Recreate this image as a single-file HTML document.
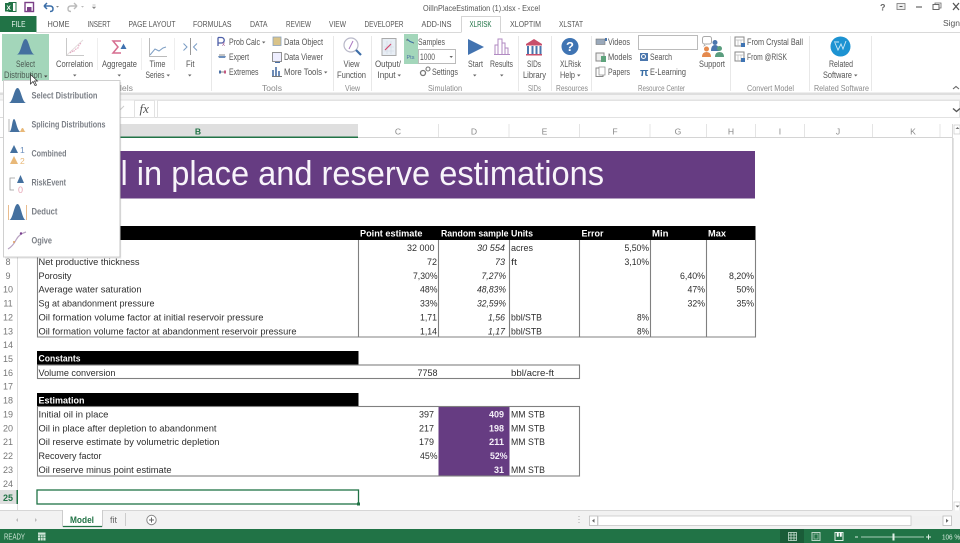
<!DOCTYPE html>
<html><head><meta charset="utf-8"><title>OilInPlaceEstimation (1).xlsx - Excel</title>
<style>
html,body{margin:0;padding:0;background:#fff;width:960px;height:543px;overflow:hidden}
svg{display:block;filter:blur(.3px)}
text{font-family:"Liberation Sans",sans-serif;white-space:pre}
.c{font-size:9.6px;fill:#2e2e2e}
.i{font-size:9.6px;fill:#2e2e2e;font-style:italic}
.h{font-size:9.6px;fill:#fff;font-weight:bold}
.w{font-size:9.6px;fill:#f4eef8;font-weight:bold}
.r{font-size:8.9px;fill:#555}
.g{font-size:8.2px;fill:#8a8a8a}
.t{font-size:8.6px;fill:#555}
.m{font-size:8.9px;fill:#7b7f86;font-weight:bold}
.n{font-size:9px;fill:#777;text-anchor:middle}
.k{font-size:8.6px;fill:#8a8a8a;text-anchor:middle}
</style></head><body>
<svg width="960" height="543" viewBox="0 0 960 543" xmlns="http://www.w3.org/2000/svg">
<rect width="960" height="543" fill="#fff"/>

<!-- title bar -->
<rect x="9" y="2.500" width="7" height="9" fill="#fff" stroke="#217346"/><rect x="5" y="3" width="8" height="8.500" fill="#217346"/>
<text x="6.500" y="10" style="font-size:6.500px;fill:#fff;font-weight:bold">X</text>
<rect x="25" y="2.500" width="8.500" height="9" fill="none" stroke="#7b3f87" stroke-width="1.400"/><rect x="27" y="7" width="4.500" height="4.500" fill="#7b3f87"/>
<path d="M44 6 L47 3 M44 6 L47 9 M44 6 H50 Q53 6 53 9 Q53 11.500 50 11.500" fill="none" stroke="#3b6ea8" stroke-width="1.500"/>
<path d="M56 6 l3 0 l-1.500 1.600z" fill="#888"/>
<path d="M77 6 L74 3 M77 6 L74 9 M77 6 H71 Q68 6 68 9 Q68 11.500 71 11.500" fill="none" stroke="#bbb" stroke-width="1.400"/>
<path d="M81 6 l3 0 l-1.500 1.600z" fill="#bbb"/>
<path d="M92.500 5h3M92.500 7l3 0l-1.500 1.600z" stroke="#888" stroke-width=".6" fill="#888"/>
<text x="423" y="11" class="t" textLength="117" lengthAdjust="spacingAndGlyphs">OilInPlaceEstimation (1).xlsx - Excel</text>
<text x="880" y="10.500" style="font-size:9px;font-weight:bold;fill:#666">?</text>
<rect x="897" y="3.500" width="8" height="6" fill="#eee" stroke="#777" stroke-width=".8"/><path d="M899.500 6.500h3" stroke="#555"/>
<path d="M916 7h6" stroke="#666" stroke-width="1.200"/>
<rect x="933" y="4.500" width="6" height="5" fill="none" stroke="#666"/><path d="M935 4.500V3h6v5h-2" fill="none" stroke="#666" stroke-width=".8"/>
<path d="M953 3 L959 10 M959 3 L953 10" stroke="#555" stroke-width="1.300"/>
<text x="943" y="26" class="t" textLength="17" lengthAdjust="spacingAndGlyphs">Sign</text>

<!-- tabs -->
<rect x="0" y="16" width="36.500" height="16" fill="#217346"/>
<text x="11.500" y="27" textLength="14" lengthAdjust="spacingAndGlyphs" style="font-size:8.600px;fill:#e8f5ee">FILE</text>
<text x="47.500" y="27" class="t" textLength="22" lengthAdjust="spacingAndGlyphs">HOME</text>
<text x="87.500" y="27" class="t" textLength="23" lengthAdjust="spacingAndGlyphs">INSERT</text>
<text x="128.500" y="27" class="t" textLength="47" lengthAdjust="spacingAndGlyphs">PAGE LAYOUT</text>
<text x="193" y="27" class="t" textLength="38.500" lengthAdjust="spacingAndGlyphs">FORMULAS</text>
<text x="250" y="27" class="t" textLength="17.500" lengthAdjust="spacingAndGlyphs">DATA</text>
<text x="286" y="27" class="t" textLength="25" lengthAdjust="spacingAndGlyphs">REVIEW</text>
<text x="329" y="27" class="t" textLength="17" lengthAdjust="spacingAndGlyphs">VIEW</text>
<text x="364.500" y="27" class="t" textLength="39" lengthAdjust="spacingAndGlyphs">DEVELOPER</text>
<text x="421.500" y="27" class="t" textLength="30" lengthAdjust="spacingAndGlyphs">ADD-INS</text>
<path d="M461.500 32.500V16.500H500.500V32.500" fill="#fff" stroke="#d4d4d4"/>
<text x="469.500" y="27" class="t" textLength="22" lengthAdjust="spacingAndGlyphs" style="fill:#217346">XLRISK</text>
<text x="510" y="27" class="t" textLength="31" lengthAdjust="spacingAndGlyphs">XLOPTIM</text>
<text x="559" y="27" class="t" textLength="24" lengthAdjust="spacingAndGlyphs">XLSTAT</text>
<path d="M36 32.500H461M500 32.500H960" stroke="#d9d9d9"/>

<!-- ribbon bottom / formula bar -->
<rect x="0" y="92.500" width="960" height="2.500" fill="#dedede"/>
<rect x="0" y="95" width="960" height="5" fill="#f4f4f4"/>
<rect x="0" y="100" width="960" height="17.500" fill="#fff"/>
<path d="M0 117.500H960" stroke="#dcdcdc"/>
<path d="M0 100H960" stroke="#e2e2e2"/>
<rect x="134.500" y="100.500" width="20" height="17" fill="#fff" stroke="#e2e2e2"/>
<rect x="157.500" y="100.500" width="802" height="17" fill="#fff" stroke="#e2e2e2"/>
<path d="M120 110l4-4" stroke="#ccc" stroke-width="1"/>
<text x="139.500" y="113" style="font-family:'Liberation Serif',serif;font-size:13px;font-style:italic;fill:#555">fx</text>
<path d="M953 108.500l3.500 3 3.500-3" fill="none" stroke="#555" stroke-width="1.400"/>
<path d="M953 89l3-2.500 3 2.500" fill="none" stroke="#666" stroke-width="1.100"/>

<!-- ribbon separators -->
<path d="M211.500 36V91M333.500 36V91M371.500 36V91M518.500 36V91M551.500 36V91M591.500 36V91M730.500 36V91M809.500 36V91M871.500 36V91" stroke="#e8e8e8"/>
<path d="M97.500 38V70M141.500 38V70M174.500 38V70" stroke="#eee"/>

<!-- select distribution -->
<rect x="2" y="34" width="47" height="47" fill="#a3d6ba"/>
<path d="M16.500 54.500C21 54.500 22 39 25.500 39S30 54.500 35 54.500Z" fill="#44709f"/>
<text x="16" y="67" class="r" textLength="19" lengthAdjust="spacingAndGlyphs" style="fill:#4b5a52">Select</text>
<text x="4" y="78" class="r" textLength="38" lengthAdjust="spacingAndGlyphs" style="fill:#4b5a52">Distribution</text>
<path d="M44 75.500h3.500l-1.750 2z" fill="#444"/>

<!-- correlation -->
<path d="M66.500 38V55.500H84" fill="none" stroke="#c9c9c9"/><path d="M67 55L83 40" stroke="#e4dede"/>
<path d="M70 53l2-2 1 1 3-3 2-1 1-3 2-2" fill="none" stroke="#e3a9c0" stroke-width="1.200" stroke-dasharray="1.500 1"/>
<text x="56" y="67" class="r" textLength="37" lengthAdjust="spacingAndGlyphs">Correlation</text>
<path d="M73 74.500h3.500l-1.750 2z" fill="#666"/>

<!-- aggregate -->
<path d="M121 41H113L118 47L113 53H121" fill="none" stroke="#d66d8f" stroke-width="1.500"/>
<path d="M120.500 49L123.500 43.500L126.500 49Z" fill="#3f72b0"/>
<text x="102" y="67" class="r" textLength="35" lengthAdjust="spacingAndGlyphs">Aggregate</text>
<path d="M117.500 74.500h3.500l-1.750 2z" fill="#666"/>

<!-- time series -->
<path d="M149.500 38V56.500H167" fill="none" stroke="#bbb"/>
<path d="M150 55L155 49L159 51L163 48L166 47" fill="none" stroke="#7f9fc4" stroke-width="1"/>
<text x="149.500" y="67" class="r" textLength="16" lengthAdjust="spacingAndGlyphs">Time</text>
<text x="145.500" y="78" class="r" textLength="19" lengthAdjust="spacingAndGlyphs">Series</text>
<path d="M166.500 74.500h3.500l-1.750 2z" fill="#666"/>

<!-- fit -->
<path d="M183.500 43.500L187 47L183.500 50.500" fill="none" stroke="#7a9cc4"/><path d="M190.500 38V55" stroke="#999"/><path d="M197 43.500L193.500 47L197 50.500" fill="none" stroke="#7a9cc4"/>
<text x="186" y="67" class="r" textLength="8.500" lengthAdjust="spacingAndGlyphs">Fit</text>
<path d="M188 74.500h3.500l-1.750 2z" fill="#666"/>
<text x="105" y="91" class="g" textLength="28" lengthAdjust="spacingAndGlyphs">Models</text>

<!-- tools -->
<path d="M218 37.500V46M218 37.500h3.500a2.500 2.500 0 0 1 0 5.500H218" fill="none" stroke="#4e5fa8" stroke-width="1.300"/>
<text x="222" y="46" style="font-size:6px;fill:#a0538c">x</text>
<text x="229" y="45" class="r" textLength="31" lengthAdjust="spacingAndGlyphs">Prob Calc</text><path d="M262 41.500h3.400l-1.700 2z" fill="#666"/>
<path d="M218 56h8l-1 2h-6z" fill="#6d8fbc"/><path d="M219 55h6" stroke="#888"/>
<text x="229" y="60" class="r" textLength="20" lengthAdjust="spacingAndGlyphs">Expert</text>
<path d="M219 72h7" stroke="#888"/><path d="M220 70.500v3" stroke="#4a6fa5" stroke-width="2"/><path d="M225 70.500v3" stroke="#c2567f" stroke-width="2"/>
<text x="229" y="75" class="r" textLength="29.500" lengthAdjust="spacingAndGlyphs">Extremes</text>
<rect x="273" y="37" width="8" height="8.500" fill="#d9c389" stroke="#8aa2c0" stroke-width=".8"/>
<text x="284" y="45" class="r" textLength="39" lengthAdjust="spacingAndGlyphs">Data Object</text>
<rect x="272.500" y="52.500" width="9" height="9" fill="#eef" stroke="#777" stroke-width=".8"/><path d="M275 62.500h5" stroke="#4a6fa5"/>
<text x="284" y="60" class="r" textLength="39" lengthAdjust="spacingAndGlyphs">Data Viewer</text>
<path d="M273 76V70M276 76V67M279 76V71" stroke="#4a6fa5" stroke-width="1.600"/><path d="M272 76.500h10" stroke="#777"/>
<text x="284" y="75" class="r" textLength="38" lengthAdjust="spacingAndGlyphs">More Tools</text>
<path d="M324 71.500h3.400l-1.700 2z" fill="#666"/>
<text x="262" y="91" class="g" textLength="20" lengthAdjust="spacingAndGlyphs">Tools</text>

<!-- view function -->
<circle cx="351" cy="45" r="7" fill="#fff" stroke="#b9b9c9" stroke-width="1.200"/><path d="M349 49Q351 45 353 41" fill="none" stroke="#a875c0"/><path d="M356 50L361 55" stroke="#3d6ea8" stroke-width="2.200"/>
<text x="343.500" y="67" class="r" textLength="16" lengthAdjust="spacingAndGlyphs">View</text>
<text x="337" y="78" class="r" textLength="29" lengthAdjust="spacingAndGlyphs">Function</text>
<text x="345" y="91" class="g" textLength="15" lengthAdjust="spacingAndGlyphs">View</text>

<!-- output input -->
<rect x="382" y="38.500" width="14" height="17" fill="#e8eef5" stroke="#aaa"/><path d="M384 47h10M384 51h10M387 41v13M391 41v13" stroke="#cfd7e2" stroke-width=".6"/><path d="M385 50l6-6" stroke="#d34a6f" stroke-width="1.200"/>
<text x="375" y="67" class="r" textLength="26" lengthAdjust="spacingAndGlyphs">Output/</text>
<text x="377.500" y="78" class="r" textLength="18" lengthAdjust="spacingAndGlyphs">Input</text>
<path d="M397.500 74.500h3.500l-1.750 2z" fill="#666"/>

<!-- samples -->
<rect x="404" y="34" width="14" height="30" fill="#a3d6ba"/>
<path d="M407 39l3 2.500 4 1.500" fill="none" stroke="#3a6ea5"/><path d="M407 39v2M413 43h1" stroke="#777"/>
<text x="406.500" y="59" style="font-size:5.500px;fill:#4a6fa5">Pts</text>
<text x="418" y="45" class="r" textLength="27" lengthAdjust="spacingAndGlyphs">Samples</text>
<rect x="418.500" y="49.500" width="37" height="14" fill="#fff" stroke="#bbb"/>
<text x="420" y="60" class="r" textLength="15" lengthAdjust="spacingAndGlyphs">1000</text>
<path d="M449.500 56h3.400l-1.700 2z" fill="#666"/>
<circle cx="423" cy="73" r="2.500" fill="none" stroke="#777" stroke-width="1.300"/><circle cx="428" cy="69" r="2" fill="none" stroke="#777" stroke-width="1.100"/>
<text x="432" y="75" class="r" textLength="26" lengthAdjust="spacingAndGlyphs">Settings</text>
<text x="428" y="91" class="g" textLength="34" lengthAdjust="spacingAndGlyphs">Simulation</text>

<!-- start / results -->
<path d="M468 39L484 47L468 55Z" fill="#4373b0"/>
<text x="468" y="67" class="r" textLength="15" lengthAdjust="spacingAndGlyphs">Start</text>
<path d="M473 74.500h3.500l-1.750 2z" fill="#666"/>
<path d="M495 54.500V45h3v9.500M498 54.500V39h4v15.500M502 54.500V43h3v11.500M505 54.500V48h3v6.500M494 54.500h16" fill="none" stroke="#b18ac2" stroke-width="1"/>
<text x="490" y="67" class="r" textLength="23" lengthAdjust="spacingAndGlyphs">Results</text>
<path d="M500 74.500h3.500l-1.750 2z" fill="#666"/>

<!-- sids -->
<path d="M526 44L534 39L542 44Z" fill="#c94f6b"/><rect x="526" y="44" width="16" height="1.500" fill="#c94f6b"/>
<path d="M528 46V54M532.500 46V54M536.500 46V54M540.500 46V54" stroke="#4a76ad" stroke-width="2"/><rect x="526" y="54" width="16" height="1.500" fill="#c94f6b"/>
<text x="527" y="67" class="r" textLength="14" lengthAdjust="spacingAndGlyphs">SIDs</text>
<text x="523" y="78" class="r" textLength="23" lengthAdjust="spacingAndGlyphs">Library</text>
<text x="528" y="91" class="g" textLength="13" lengthAdjust="spacingAndGlyphs">SIDs</text>

<!-- help -->
<circle cx="570" cy="46.500" r="8.500" fill="#3f74b3"/>
<text x="570" y="51" style="font-size:13px;font-weight:bold;fill:#fff;text-anchor:middle">?</text>
<text x="560" y="67" class="r" textLength="21" lengthAdjust="spacingAndGlyphs">XLRisk</text>
<text x="560" y="78" class="r" textLength="15" lengthAdjust="spacingAndGlyphs">Help</text>
<path d="M577 74.500h3.500l-1.750 2z" fill="#666"/>
<text x="556" y="91" class="g" textLength="32" lengthAdjust="spacingAndGlyphs">Resources</text>

<!-- resource center -->
<rect x="596" y="39" width="9" height="5.500" fill="#9aa9bb" stroke="#777" stroke-width=".6"/><rect x="605" y="38" width="2" height="3" fill="#4a76ad"/>
<text x="608" y="45" class="r" textLength="22" lengthAdjust="spacingAndGlyphs">Videos</text>
<rect x="596" y="53" width="8" height="8" fill="#eee" stroke="#888"/><rect x="601" y="56" width="5" height="6" fill="#5ea37c"/>
<text x="608" y="60" class="r" textLength="24" lengthAdjust="spacingAndGlyphs">Models</text>
<rect x="596" y="68" width="7" height="8.500" fill="#fff" stroke="#888"/><rect x="599" y="67" width="6" height="8" fill="#fff" stroke="#888" stroke-width=".7"/>
<text x="608" y="75" class="r" textLength="22" lengthAdjust="spacingAndGlyphs">Papers</text>
<rect x="638.500" y="35.500" width="59" height="14" fill="#fff" stroke="#bbb"/>
<rect x="640" y="53" width="8" height="8" fill="#4a76ad"/><circle cx="643.500" cy="56.500" r="2" fill="none" stroke="#fff"/>
<text x="650" y="60" class="r" textLength="22" lengthAdjust="spacingAndGlyphs">Search</text>
<text x="640" y="76" style="font-size:11px;fill:#3a6ea5;font-weight:bold">π</text>
<text x="650" y="75" class="r" textLength="36" lengthAdjust="spacingAndGlyphs">E-Learning</text>
<text x="638" y="91" class="g" textLength="47" lengthAdjust="spacingAndGlyphs">Resource Center</text>

<!-- support -->
<rect x="702.500" y="36.500" width="9" height="7.500" rx="2" fill="#fff" stroke="#aaa"/><path d="M705 44l-1 2 3-2" fill="#fff" stroke="#aaa" stroke-width=".7"/>
<circle cx="706.500" cy="49" r="2.500" fill="#e58a4e"/><path d="M702 57q0-5 4.500-5t4.500 5z" fill="#e58a4e"/>
<circle cx="715" cy="42.500" r="2.500" fill="#4a76ad"/><path d="M711 51q0-6 4-6t4 6z" fill="#4a76ad"/>
<circle cx="719.500" cy="48.500" r="2.500" fill="#5a9d7e"/><path d="M715 57q0-5 4.500-5t4.500 5z" fill="#5a9d7e"/>
<text x="699" y="67" class="r" textLength="26" lengthAdjust="spacingAndGlyphs">Support</text>

<!-- convert -->
<rect x="735" y="37" width="9" height="9" fill="#fff" stroke="#888"/><path d="M735 40h9M738 40v6M741 40v6" stroke="#bbb" stroke-width=".7"/><rect x="741" y="43" width="4" height="4" fill="#3f74b3"/>
<text x="747" y="45" class="r" textLength="56" lengthAdjust="spacingAndGlyphs">From Crystal Ball</text>
<rect x="735" y="52" width="9" height="9" fill="#fff" stroke="#888"/><path d="M735 55h9M738 55v6M741 55v6" stroke="#bbb" stroke-width=".7"/><rect x="741" y="58" width="4" height="4" fill="#3f74b3"/>
<text x="747" y="60" class="r" textLength="40" lengthAdjust="spacingAndGlyphs">From @RISK</text>
<text x="747" y="91" class="g" textLength="47" lengthAdjust="spacingAndGlyphs">Convert Model</text>

<!-- related -->
<circle cx="840.500" cy="46.500" r="10" fill="#1d93d2"/>
<path d="M835 43l3 7 3-6 2 5 3-8M834 42h5" fill="none" stroke="#cfeaf7" stroke-width=".9"/>
<text x="829" y="67" class="r" textLength="24" lengthAdjust="spacingAndGlyphs">Related</text>
<text x="823" y="78" class="r" textLength="29" lengthAdjust="spacingAndGlyphs">Software</text>
<path d="M854 74.500h3.500l-1.750 2z" fill="#666"/>
<text x="814" y="91" class="g" textLength="55" lengthAdjust="spacingAndGlyphs">Related Software</text>

<!-- column headers -->
<path d="M0 137.500H952" stroke="#d4d4d4"/>
<rect x="18" y="124" width="340" height="13" fill="#dfdfdf"/>
<rect x="18" y="136.500" width="340" height="1.500" fill="#217346"/>
<path d="M438.500 124V137M509 124V137M579.500 124V137M650 124V137M706.500 124V137M755.500 124V137M804.500 124V137M872.500 124V137M940 124V137" stroke="#e4e4e4"/>
<text x="198" y="134.500" class="k" style="fill:#217346;font-weight:bold">B</text>
<text x="398" y="134.500" class="k">C</text><text x="474" y="134.500" class="k">D</text><text x="544.500" y="134.500" class="k">E</text><text x="615" y="134.500" class="k">F</text><text x="678" y="134.500" class="k">G</text><text x="731" y="134.500" class="k">H</text><text x="780" y="134.500" class="k">I</text><text x="838" y="134.500" class="k">J</text><text x="913" y="134.500" class="k">K</text>

<!-- row headers -->
<path d="M17.500 138V511" stroke="#dcdcdc"/>
<text x="8" y="265" class="n">8</text><text x="8" y="279" class="n">9</text><text x="8" y="292.500" class="n">10</text><text x="8" y="306.500" class="n">11</text><text x="8" y="320.500" class="n">12</text><text x="8" y="334.500" class="n">13</text><text x="8" y="348" class="n">14</text><text x="8" y="362" class="n">15</text><text x="8" y="376" class="n">16</text><text x="8" y="389.500" class="n">17</text><text x="8" y="403.500" class="n">18</text><text x="8" y="417.500" class="n">19</text><text x="8" y="431.500" class="n">20</text><text x="8" y="445" class="n">21</text><text x="8" y="459" class="n">22</text><text x="8" y="473" class="n">23</text><text x="8" y="487" class="n">24</text>
<rect x="0" y="490" width="17.500" height="14" fill="#dfdfdf"/><rect x="16.500" y="490" width="1.500" height="14" fill="#217346"/>
<text x="8" y="501" class="n" style="fill:#217346;font-weight:bold">25</text>

<!-- title banner -->
<rect x="37" y="151" width="718" height="47.500" fill="#663c82"/>
<text x="84" y="185" style="font-size:34px;fill:#f8f4fa">Oi</text>
<text x="120.500" y="185" textLength="483.500" lengthAdjust="spacingAndGlyphs" style="font-size:34px;fill:#f8f4fa">l in place and reserve estimations</text>

<!-- main table -->
<rect x="37" y="226" width="718.500" height="14" fill="#000"/>
<path d="M37.500 240V337H755.500V240M358.500 240V337M438.500 240V337M509.500 240V337M579.500 240V337M650.500 240V337M706.500 240V337" fill="none" stroke="#808080" stroke-width="1.100"/>
<text x="360" y="236.500" class="h" textLength="62.500" lengthAdjust="spacingAndGlyphs">Point estimate</text>
<text x="441" y="236.500" class="h" textLength="67.500" lengthAdjust="spacingAndGlyphs">Random sample</text>
<text x="511" y="236.500" class="h" textLength="22" lengthAdjust="spacingAndGlyphs">Units</text>
<text x="581.500" y="236.500" class="h" textLength="22" lengthAdjust="spacingAndGlyphs">Error</text>
<text x="652" y="236.500" class="h" textLength="16.500" lengthAdjust="spacingAndGlyphs">Min</text>
<text x="708" y="236.500" class="h" textLength="18" lengthAdjust="spacingAndGlyphs">Max</text>

<text x="38.500" y="265" class="c" textLength="101" lengthAdjust="spacingAndGlyphs">Net productive thickness</text>
<text x="38.500" y="279" class="c" textLength="33" lengthAdjust="spacingAndGlyphs">Porosity</text>
<text x="38.500" y="292.500" class="c" textLength="103" lengthAdjust="spacingAndGlyphs">Average water saturation</text>
<text x="38.500" y="306.500" class="c" textLength="116" lengthAdjust="spacingAndGlyphs">Sg at abandonment pressure</text>
<text x="38.500" y="320.500" class="c" textLength="225" lengthAdjust="spacingAndGlyphs">Oil formation volume factor at initial reservoir pressure</text>
<text x="38.500" y="334.500" class="c" textLength="258" lengthAdjust="spacingAndGlyphs">Oil formation volume factor at abandonment reservoir pressure</text>

<text x="407" y="251" class="c" textLength="27.500" lengthAdjust="spacingAndGlyphs">32 000</text>
<text x="427" y="265" class="c" textLength="10" lengthAdjust="spacingAndGlyphs">72</text>
<text x="413" y="279" class="c" textLength="24.500" lengthAdjust="spacingAndGlyphs">7,30%</text>
<text x="420" y="292.500" class="c" textLength="17.500" lengthAdjust="spacingAndGlyphs">48%</text>
<text x="420" y="306.500" class="c" textLength="17.500" lengthAdjust="spacingAndGlyphs">33%</text>
<text x="420" y="320.500" class="c" textLength="17" lengthAdjust="spacingAndGlyphs">1,71</text>
<text x="420" y="334.500" class="c" textLength="17" lengthAdjust="spacingAndGlyphs">1,14</text>

<text x="477" y="251" class="i" textLength="28" lengthAdjust="spacingAndGlyphs">30 554</text>
<text x="495" y="265" class="i" textLength="10" lengthAdjust="spacingAndGlyphs">73</text>
<text x="481.500" y="279" class="i" textLength="24.500" lengthAdjust="spacingAndGlyphs">7,27%</text>
<text x="477" y="292.500" class="i" textLength="29" lengthAdjust="spacingAndGlyphs">48,83%</text>
<text x="477" y="306.500" class="i" textLength="29" lengthAdjust="spacingAndGlyphs">32,59%</text>
<text x="488" y="320.500" class="i" textLength="17" lengthAdjust="spacingAndGlyphs">1,56</text>
<text x="488" y="334.500" class="i" textLength="17" lengthAdjust="spacingAndGlyphs">1,17</text>

<text x="511" y="251" class="c" textLength="22" lengthAdjust="spacingAndGlyphs">acres</text>
<text x="511" y="265" class="c" textLength="6" lengthAdjust="spacingAndGlyphs">ft</text>
<text x="511" y="320.500" class="c" textLength="31" lengthAdjust="spacingAndGlyphs">bbl/STB</text>
<text x="511" y="334.500" class="c" textLength="31" lengthAdjust="spacingAndGlyphs">bbl/STB</text>

<text x="624.500" y="251" class="c" textLength="24.500" lengthAdjust="spacingAndGlyphs">5,50%</text>
<text x="624.500" y="265" class="c" textLength="24.500" lengthAdjust="spacingAndGlyphs">3,10%</text>
<text x="637" y="320.500" class="c" textLength="12" lengthAdjust="spacingAndGlyphs">8%</text>
<text x="637" y="334.500" class="c" textLength="12" lengthAdjust="spacingAndGlyphs">8%</text>

<text x="680" y="279" class="c" textLength="25" lengthAdjust="spacingAndGlyphs">6,40%</text>
<text x="687.500" y="292.500" class="c" textLength="17.500" lengthAdjust="spacingAndGlyphs">47%</text>
<text x="687.500" y="306.500" class="c" textLength="17.500" lengthAdjust="spacingAndGlyphs">32%</text>
<text x="729" y="279" class="c" textLength="25" lengthAdjust="spacingAndGlyphs">8,20%</text>
<text x="736.500" y="292.500" class="c" textLength="17.500" lengthAdjust="spacingAndGlyphs">50%</text>
<text x="736.500" y="306.500" class="c" textLength="17.500" lengthAdjust="spacingAndGlyphs">35%</text>

<!-- constants -->
<rect x="37" y="351" width="321.500" height="14" fill="#000"/>
<text x="38.500" y="361.500" class="h" textLength="42" lengthAdjust="spacingAndGlyphs">Constants</text>
<rect x="37.500" y="365" width="542" height="13.500" fill="none" stroke="#808080" stroke-width="1.100"/>
<text x="38.500" y="376" class="c" textLength="77" lengthAdjust="spacingAndGlyphs">Volume conversion</text>
<text x="417.500" y="376" class="c" textLength="20" lengthAdjust="spacingAndGlyphs">7758</text>
<text x="511" y="376" class="c" textLength="43" lengthAdjust="spacingAndGlyphs">bbl/acre-ft</text>

<!-- estimation -->
<rect x="37" y="393" width="321.500" height="13.500" fill="#000"/>
<text x="38.500" y="403.500" class="h" textLength="46" lengthAdjust="spacingAndGlyphs">Estimation</text>
<rect x="438.500" y="406.500" width="71" height="69.500" fill="#663c82"/>
<rect x="37.500" y="406.500" width="542" height="69.500" fill="none" stroke="#808080" stroke-width="1.100"/>
<text x="38.500" y="417.500" class="c" textLength="70" lengthAdjust="spacingAndGlyphs">Initial oil in place</text>
<text x="38.500" y="431.500" class="c" textLength="178" lengthAdjust="spacingAndGlyphs">Oil in place after depletion to abandonment</text>
<text x="38.500" y="445" class="c" textLength="181" lengthAdjust="spacingAndGlyphs">Oil reserve estimate by volumetric depletion</text>
<text x="38.500" y="459" class="c" textLength="63" lengthAdjust="spacingAndGlyphs">Recovery factor</text>
<text x="38.500" y="473" class="c" textLength="133" lengthAdjust="spacingAndGlyphs">Oil reserve minus point estimate</text>
<text x="419" y="417.500" class="c" textLength="15" lengthAdjust="spacingAndGlyphs">397</text>
<text x="419" y="431.500" class="c" textLength="15" lengthAdjust="spacingAndGlyphs">217</text>
<text x="419" y="445" class="c" textLength="15" lengthAdjust="spacingAndGlyphs">179</text>
<text x="420" y="459" class="c" textLength="17.500" lengthAdjust="spacingAndGlyphs">45%</text>
<text x="489" y="417.500" class="w" textLength="15" lengthAdjust="spacingAndGlyphs">409</text>
<text x="489" y="431.500" class="w" textLength="15" lengthAdjust="spacingAndGlyphs">198</text>
<text x="489" y="445" class="w" textLength="15" lengthAdjust="spacingAndGlyphs">211</text>
<text x="490" y="459" class="w" textLength="17.500" lengthAdjust="spacingAndGlyphs">52%</text>
<text x="494" y="473" class="w" textLength="10" lengthAdjust="spacingAndGlyphs">31</text>
<text x="511" y="417.500" class="c" textLength="34" lengthAdjust="spacingAndGlyphs">MM STB</text>
<text x="511" y="431.500" class="c" textLength="34" lengthAdjust="spacingAndGlyphs">MM STB</text>
<text x="511" y="445" class="c" textLength="34" lengthAdjust="spacingAndGlyphs">MM STB</text>
<text x="511" y="473" class="c" textLength="34" lengthAdjust="spacingAndGlyphs">MM STB</text>

<!-- selection -->
<rect x="37" y="490" width="321.500" height="14" fill="none" stroke="#217346" stroke-width="1.300"/>
<rect x="357" y="502.500" width="3" height="3" fill="#217346"/>

<!-- vertical scrollbar -->
<path d="M952.500 124V511" stroke="#d8d8d8"/>
<rect x="953" y="124" width="7" height="387" fill="#fff"/>
<path d="M954 125h6v9h-6z" fill="#fff" stroke="#ccc" stroke-width=".7"/><path d="M955.500 129l2-2 2 2z" fill="#777"/>
<path d="M954 502h6v9h-6z" fill="#fff" stroke="#ccc" stroke-width=".7"/><path d="M955.500 505.500l2 2 2-2z" fill="#777"/>
<path d="M953.500 138V490" stroke="#e4e4e4"/>

<!-- sheet tabs -->
<rect x="0" y="510.500" width="960" height="18.500" fill="#f2f2f2"/>
<path d="M0 510.500H952" stroke="#d6d6d6"/>
<path d="M16 520l2-2v4zM37 520l-2-2v4z" fill="#bbb"/>
<rect x="62.500" y="510" width="40" height="16" fill="#fff"/>
<path d="M62.500 510V526.500H102.500V510" fill="none" stroke="#ccc"/><path d="M63 526.500H102" stroke="#217346" stroke-width="1.200"/>
<text x="70" y="523" textLength="24" lengthAdjust="spacingAndGlyphs" style="font-size:9.500px;font-weight:bold;fill:#217346">Model</text>
<text x="110" y="523" textLength="7" lengthAdjust="spacingAndGlyphs" style="font-size:9.500px;fill:#666">fit</text>
<path d="M125.500 513V526" stroke="#ccc"/>
<circle cx="151.500" cy="520" r="4.700" fill="#fff" stroke="#888"/><path d="M149 520h5M151.500 517.500v5" stroke="#666"/>
<path d="M579 516v1M579 519v1M579 522v1" stroke="#aaa"/>
<rect x="589.500" y="516" width="362" height="9.500" fill="#f0f0f0"/>
<rect x="589.500" y="516" width="8" height="9.500" fill="#fff" stroke="#bbb" stroke-width=".8"/><path d="M592 520.700l2.500-2v4z" fill="#666"/>
<rect x="598" y="516" width="313" height="9.500" fill="#fff" stroke="#c8c8c8" stroke-width=".8"/>
<rect x="943" y="516" width="8.500" height="9.500" fill="#fff" stroke="#bbb" stroke-width=".8"/><path d="M948.500 520.700l-2.500-2v4z" fill="#666"/>

<!-- status bar -->
<rect x="0" y="529" width="960" height="14" fill="#217346"/>
<text x="4" y="539.500" textLength="21" lengthAdjust="spacingAndGlyphs" style="font-size:8px;fill:#cfe6d8">READY</text>
<rect x="38" y="532.500" width="7.500" height="8" fill="#cfe6d8"/><path d="M38 535h7.500M38 537.500h7.500M40.500 535v5.500M43 535v5.500" stroke="#217346" stroke-width=".6"/>
<rect x="780" y="529" width="24" height="14" fill="#1a5c38"/>
<path d="M788.500 532.500h8v8h-8zM788.500 535h8M788.500 538h8M791 532.500v8M794 532.500v8" fill="none" stroke="#d9ebe0" stroke-width=".7"/>
<rect x="812" y="532.500" width="8" height="8" fill="none" stroke="#bcd6c6"/><rect x="814" y="534" width="4" height="5" fill="none" stroke="#bcd6c6" stroke-width=".6"/>
<rect x="835" y="532.500" width="8" height="8" fill="none" stroke="#e2f0e8"/><path d="M837 532.500v4h1.500v-4M840 532.500v4h1.500v-4" fill="#fff" stroke="#fff" stroke-width=".5"/>
<path d="M855 537h3" stroke="#d9ebe0"/><path d="M861 537H924" stroke="#a9cdb8"/><path d="M893.500 533.500v7" stroke="#e2f0e8" stroke-width="2"/><path d="M926 537h5M928.500 534.500v5" stroke="#e2f0e8"/>
<text x="942" y="539.500" textLength="18" lengthAdjust="spacingAndGlyphs" style="font-size:7px;fill:#d9ebe0">106 %</text>

<!-- dropdown menu -->
<rect x="3.500" y="80.500" width="116.500" height="176.500" fill="#fff" stroke="#d0d0d0"/>
<path d="M120.500 82V258H5" fill="none" stroke="#000" stroke-opacity=".08" stroke-width="1.500"/>
<path d="M8.500 103C13 103 14 88 17.500 88S22 103 26.500 103Z" fill="#44709f"/>
<text x="31.500" y="98.500" class="m" textLength="66" lengthAdjust="spacingAndGlyphs">Select Distribution</text>
<path d="M9 132C12 132 12 119 14 119S17 132 21 132Z" fill="#44709f"/><path d="M19 132C21 132 21 128 22.500 128S24 132 26 132Z" fill="#e8b878"/><path d="M9 119V132" stroke="#888" stroke-width=".6"/>
<text x="31.500" y="127.500" class="m" textLength="74" lengthAdjust="spacingAndGlyphs">Splicing Distributions</text>
<path d="M10 153L14 145L18 153Z" fill="#44709f"/><path d="M10 164L14 156L18 164Z" fill="#e8b878"/>
<text x="20" y="153" style="font-size:8.500px;fill:#6c8fbc">1</text><text x="20" y="164" style="font-size:8.500px;fill:#e8b878">2</text>
<text x="31.500" y="156.500" class="m" textLength="35" lengthAdjust="spacingAndGlyphs">Combined</text>
<path d="M17 183L20.500 175L24 183Z" fill="#44709f"/>
<path d="M15 178H10V190H14" fill="none" stroke="#999" stroke-width=".8"/>
<text x="18" y="193" style="font-size:9px;fill:#e6a3b4">0</text>
<text x="31.500" y="185.500" class="m" textLength="34.500" lengthAdjust="spacingAndGlyphs">RiskEvent</text>
<path d="M9 220C13 220 14 204 17.500 204S22 220 26 220Z" fill="#44709f"/><path d="M8.500 205V220M26.500 205V220" stroke="#e0a060" stroke-width=".7"/>
<text x="31.500" y="214.500" class="m" textLength="26" lengthAdjust="spacingAndGlyphs">Deduct</text>
<path d="M8 249Q13 246 16 240T26 232" fill="none" stroke="#b9a3c2" stroke-width="1.200"/><circle cx="21" cy="233.500" r="1.200" fill="#7a3f90"/><circle cx="14" cy="242" r="1" fill="#e0a060"/>
<text x="31.500" y="243.500" class="m" textLength="20.500" lengthAdjust="spacingAndGlyphs">Ogive</text>

<!-- cursor -->
<path d="M30.500 74.500V84L33 81.500L35 85.500L36.500 85L34.500 81H37.500Z" fill="#fff" stroke="#222" stroke-width=".7"/>
</svg>
</body></html>
